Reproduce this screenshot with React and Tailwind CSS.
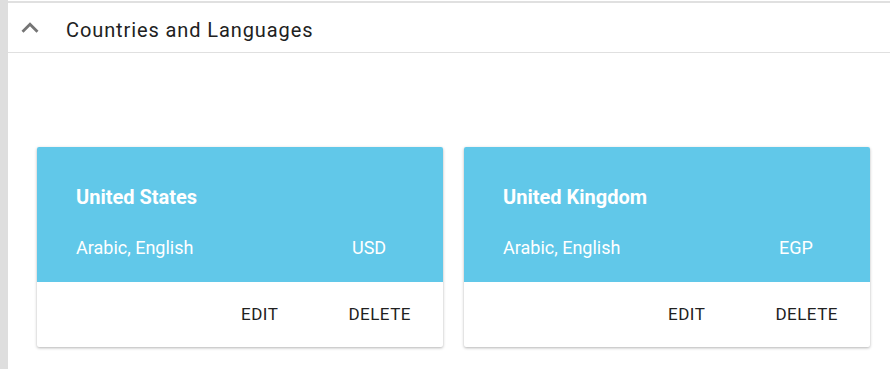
const countries = [
  { name: 'United States', languages: 'Arabic, English', currency: 'USD' },
  { name: 'United Kingdom', languages: 'Arabic, English', currency: 'EGP' },
];

function ExpandLess() {
  return (
    <svg viewBox="0 0 24 24" className="h-[34px] w-[34px] fill-[#757575]">
      <path d="M12 8l-6 6 1.41 1.41L12 10.83l4.59 4.58L18 14z" />
    </svg>
  );
}

function CountryCard({ country }) {
  return (
    <div className="w-[406px] overflow-hidden rounded-[2px] bg-white shadow-[0_1px_3px_rgba(0,0,0,0.3)]">
      <div className="h-[135px] bg-[#61c8e9] px-[39px] pt-[38px] text-white">
        <p className="text-[20px] font-bold leading-[24px]">{country.name}</p>
        <div className="mt-[27px] grid grid-cols-[276px_1fr] text-[18px] leading-[24px]">
          <span>{country.languages}</span>
          <span>{country.currency}</span>
        </div>
      </div>
      <div className="flex h-[65px] items-center justify-end gap-[70px] pr-[32px] text-[17px] tracking-[0.5px] text-[#212121]">
        <button>EDIT</button>
        <button>DELETE</button>
      </div>
    </div>
  );
}

export default function App() {
  return (
    <main className="flex h-screen bg-white font-['Roboto',sans-serif]">
      <div className="w-[8px] shrink-0 bg-[#dedede]" />
      <div className="flex-1 pt-px">
        <div className="border-t-2 border-[#e0e0e0]">
          <div className="flex h-[50px] items-center border-b border-[#e0e0e0] pl-[5px]">
            <ExpandLess />
            <h2 className="ml-[19px] mt-[4px] text-[20px] tracking-[0.9px] text-[#212121]">Countries and Languages</h2>
          </div>
        </div>
        <section className="flex gap-[21px] px-[29px] pt-[94px]">
          {countries.map((c) => (
            <CountryCard key={c.name} country={c} />
          ))}
        </section>
      </div>
    </main>
  );
}
